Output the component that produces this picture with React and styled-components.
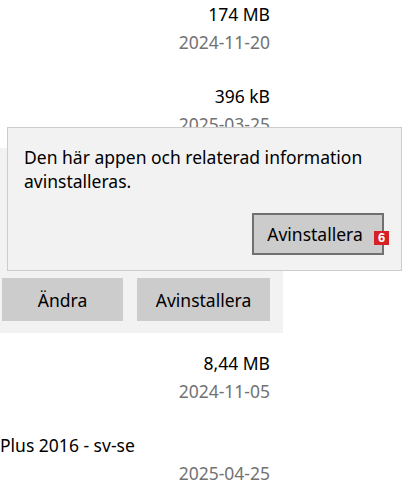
import React from 'react';
import styled, { createGlobalStyle } from 'styled-components';

const GlobalStyle = createGlobalStyle`
  html, body {
    margin: 0;
    padding: 0;
    background: #ffffff;
  }
  body {
    font-family: 'Noto Sans', 'Open Sans', sans-serif;
    color: #000000;
    overflow: hidden;
  }
`;

const Page = styled.div`
  position: relative;
  width: 413px;
  height: 484px;
  overflow: hidden;
`;

const List = styled.div`
  width: 283px;
  margin-top: -16px;
`;

const Row = styled.div`
  display: flex;
  flex-direction: column;
  padding: 16px 13px ${props => (props.expanded ? '12px' : '10px')} 0;
  background: ${props => (props.expanded ? '#f2f2f2' : 'transparent')};
`;

const Lines = styled.div`
  display: grid;
  grid-template-columns: 1fr auto;
  grid-auto-rows: 28px;
  align-items: center;
  font-size: 17.5px;
`;

const Name = styled.div`
  color: #000000;
  white-space: nowrap;
`;

const Meta = styled.div`
  text-align: right;
  color: ${props => (props.muted ? '#727272' : '#000000')};
  white-space: nowrap;
`;

const Actions = styled.div`
  display: flex;
  justify-content: flex-end;
  gap: 14px;
  margin-top: 58px;
`;

const Button = styled.button`
  width: ${props => props.w}px;
  height: 43px;
  border: none;
  background: #cccccc;
  font-family: inherit;
  font-size: 17.5px;
  color: #000000;
  padding: 0;
`;

const Flyout = styled.div`
  position: absolute;
  left: 7px;
  top: 127px;
  width: 395px;
  height: 144px;
  box-sizing: border-box;
  border: 1px solid #cccccc;
  background: #f2f2f2;
  padding: 17px 17px 15px 16px;
  display: flex;
  flex-direction: column;
  justify-content: space-between;
`;

const Message = styled.p`
  margin: 0;
  font-size: 17.5px;
  line-height: 24px;
  color: #000000;
`;

const FlyoutFooter = styled.div`
  display: flex;
  justify-content: flex-end;
`;

const ConfirmButton = styled.button`
  position: relative;
  width: 132px;
  height: 42px;
  box-sizing: border-box;
  border: 2px solid #707070;
  background: #cccccc;
  font-family: inherit;
  font-size: 17.5px;
  color: #000000;
  padding: 0 6px 0 0;
`;

const Badge = styled.span`
  position: absolute;
  left: 120px;
  top: 16px;
  width: 15px;
  height: 14px;
  background: #d71f26;
  color: #ffffff;
  font-family: 'Liberation Sans', Arial, sans-serif;
  font-weight: bold;
  font-size: 13px;
  line-height: 14px;
  text-align: center;
`;

const rows = [
  { name: '', size: '174 MB', date: '2024-11-20' },
  { name: '', size: '396 kB', date: '2025-03-25' },
  { name: '', size: '', date: '', expanded: true },
  { name: '', size: '8,44 MB', date: '2024-11-05' },
  { name: 'Plus 2016 - sv-se', size: '', date: '2025-04-25' },
];

const App = () => (
  <Page>
    <GlobalStyle />
    <List>
      {rows.map((row, i) => (
        <Row key={i} expanded={row.expanded}>
          <Lines>
            <Name>{row.name}</Name>
            <Meta>{row.size}</Meta>
            <Name />
            <Meta muted>{row.date}</Meta>
          </Lines>
          {row.expanded && (
            <Actions>
              <Button w={121}>Ändra</Button>
              <Button w={133}>Avinstallera</Button>
            </Actions>
          )}
        </Row>
      ))}
    </List>
    <Flyout>
      <Message>
        Den här appen och relaterad information
        <br />
        avinstalleras.
      </Message>
      <FlyoutFooter>
        <ConfirmButton>
          Avinstallera
          <Badge>6</Badge>
        </ConfirmButton>
      </FlyoutFooter>
    </Flyout>
  </Page>
);

export default App;
